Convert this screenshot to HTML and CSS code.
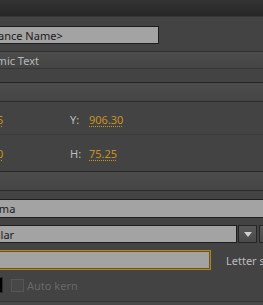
FILE: index.html
```html
<html lang="en"><head>
    <meta charset="UTF-8">
    <meta name="viewport" content="width=device-width, initial-scale=1.0">
    <title>Properties</title>
    <link rel="stylesheet" href="styles.css">
</head>
<body>

<div class="panel">
    <div class="topbar"></div>

    <div class="name-row">
        <div class="field name-field">&lt;Instance Name&gt;</div>
    </div>

    <div class="type-bar">Dynamic Text</div>
    <div class="spacer-13"></div>

    <div class="section">Position and Size</div>
    <div class="xy-row first">
        <div class="pair"><span class="lbl">X:</span><span class="val">216.35</span></div>
        <div class="pair"><span class="lbl">Y:</span><span class="val">906.30</span></div>
    </div>
    <div class="xy-row second">
        <div class="pair"><span class="lbl">W:</span><span class="val">138.50</span></div>
        <div class="pair"><span class="lbl">H:</span><span class="val">75.25</span></div>
    </div>

    <div class="section">Character</div>

    <div class="char-row font-row">
        <div class="field font-field">Tahoma</div>
    </div>
    <div class="char-row style-row">
        <div class="field style-field">Regular</div>
        <div class="btn arrow-btn"><span class="tri"></span></div>
        <div class="btn embed-btn"></div>
    </div>
    <div class="char-row size-row">
        <div class="field size-field"></div>
        <span class="text-label">Letter spacing:</span>
    </div>
    <div class="char-row color-row">
        <div class="swatch"></div>
        <div class="check"></div>
        <span class="disabled">Auto kern</span>
    </div>
    <div class="bottom-line"></div>
</div>

</body></html>
```

FILE: styles.css
```css
body {
    font-family: 'Noto Sans', 'DejaVu Sans', sans-serif;
    font-size: 11px;
    background-color: #434343;
    margin: 0;
    padding: 0;
    overflow: hidden;
}
.panel {
    margin-left: -110px;
    width: 450px;
}
.topbar {
    height: 17px;
    background: linear-gradient(#333, #272727);
    border-bottom: 1px solid #363636;
    box-sizing: border-box;
}
.name-row {
    height: 34px;
    padding-top: 9px;
    box-sizing: border-box;
}
.field {
    background-color: #a3a3a3;
    border: 1px solid #1e1e1e;
    box-sizing: border-box;
    color: #1a1a1a;
    display: flex;
    align-items: center;
    white-space: nowrap;
    overflow: hidden;
}
.name-field {
    margin-left: 60px;
    width: 209px;
    height: 18px;
    padding-left: 21px;
}
.type-bar {
    height: 18px;
    box-sizing: border-box;
    border-top: 1px solid #2e2e2e;
    border-bottom: 1px solid #363636;
    background: linear-gradient(#4d4d4d, #444);
    color: #b8b8b8;
    padding-left: 80px;
    display: flex;
    align-items: center;
}
.spacer-13 {
    height: 13px;
}
.section {
    height: 20px;
    box-sizing: border-box;
    border-top: 1px solid #262626;
    border-bottom: 1px solid #2c2c2c;
    background: linear-gradient(#4c4c4c, #454545);
    color: #c0c0c0;
    padding-left: 4px;
    display: flex;
    align-items: center;
}
.xy-row {
    display: flex;
    align-items: center;
    padding-left: 60px;
}
.xy-row.first {
    height: 33px;
    border-bottom: 1px solid #3a3a3a;
    padding-top: 2px;
    box-sizing: border-box;
}
.xy-row.second {
    height: 36px;
}
.pair {
    width: 120px;
    display: flex;
    align-items: center;
}
.lbl {
    width: 19px;
    color: #bdbdbd;
}
.val {
    color: #c8931c;
    text-decoration: underline dotted;
    text-underline-offset: 2px;
}
.char-row {
    display: flex;
    align-items: center;
    margin-left: 50px;
}
.font-row {
    padding-top: 8px;
}
.font-field {
    width: 400px;
    height: 19px;
    padding-left: 33px;
}
.style-row {
    margin-top: 7px;
}
.style-field {
    width: 297px;
    height: 18px;
    padding-left: 33px;
}
.btn {
    height: 18px;
    box-sizing: border-box;
    border: 1px solid #262626;
    background: linear-gradient(#585858, #4a4a4a);
    display: flex;
    align-items: center;
    justify-content: center;
}
.arrow-btn {
    width: 19px;
    margin-left: 1px;
}
.tri {
    width: 0;
    height: 0;
    border-left: 4px solid transparent;
    border-right: 4px solid transparent;
    border-top: 5px solid #d0d0d0;
}
.embed-btn {
    width: 20px;
    margin-left: 2px;
}
.size-row {
    margin-top: 7px;
}
.size-field {
    width: 271px;
    height: 20px;
    border: 1px solid #b08617;
    box-shadow: inset 0 0 0 1px #6a5320;
}
.text-label {
    margin-left: 15px;
    color: #bcbcbc;
    white-space: nowrap;
}
.color-row {
    margin-top: 7px;
    height: 16px;
}
.swatch {
    margin-left: 48px;
    width: 15px;
    height: 16px;
    background-color: #000;
    border: 1px solid #2a2a2a;
    box-sizing: border-box;
}
.check {
    margin-left: 8px;
    width: 11px;
    height: 11px;
    border: 1px solid #565656;
    background-color: #474747;
}
.disabled {
    margin-left: 3px;
    color: #686868;
}
.bottom-line {
    margin-top: 8px;
    height: 1px;
    background-color: #333;
    border-bottom: 3px solid #484848;
}
```
